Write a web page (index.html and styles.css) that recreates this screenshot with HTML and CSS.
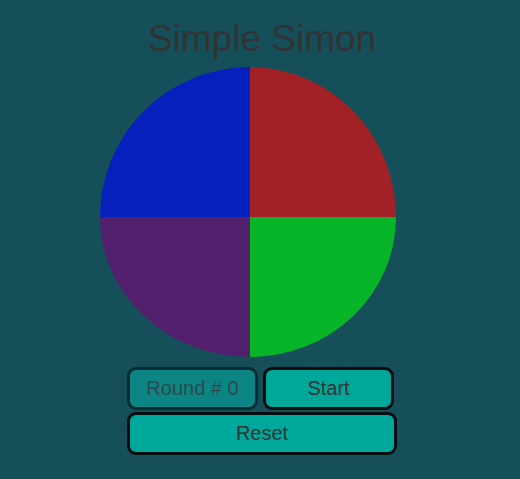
FILE: index.html
```html
<!DOCTYPE html>
<html>
<head>
<meta charset="utf-8">
<title>Simple Simon</title>
<link rel="stylesheet" href="styles.css">
</head>
<body>
<main class="app">
  <h1 class="title">Simple Simon</h1>
  <div class="board">
    <div class="row">
      <div class="pad pad-blue"></div>
      <div class="pad pad-red"></div>
    </div>
    <div class="row">
      <div class="pad pad-purple"></div>
      <div class="pad pad-green"></div>
    </div>
  </div>
  <div class="controls">
    <div class="controls-row">
      <div class="btn btn-round">Round # 0</div>
      <button class="btn btn-start">Start</button>
    </div>
    <button class="btn btn-reset">Reset</button>
  </div>
</main>
</body>
</html>
```

FILE: styles.css
```css
html, body {
  margin: 0;
  padding: 0;
  background: #154f5a;
}
body {
  font-family: "Liberation Sans", Arial, Helvetica, sans-serif;
  color: #333333;
}
.app {
  display: flex;
  flex-direction: column;
  align-items: center;
  padding-top: 17px;
}
.title {
  margin: 0 0 6px 4px;
  font-size: 37px;
  line-height: 44px;
  font-weight: normal;
  color: #333333;
}
.board {
  display: flex;
  flex-direction: column;
  width: 296px;
  margin-right: 24px;
}
.row {
  display: flex;
}
.pad-blue {
  width: 150px;
  height: 150px;
  background: #0520bd;
  border-top-left-radius: 150px 150px;
}
.pad-red {
  width: 146px;
  height: 150px;
  background: #a12126;
  border-top-right-radius: 146px 150px;
}
.pad-purple {
  width: 150px;
  height: 140px;
  background: #53206e;
  border-bottom-left-radius: 150px 140px;
}
.pad-green {
  width: 146px;
  height: 140px;
  background: #09b528;
  border-bottom-right-radius: 146px 140px;
}
.controls {
  display: flex;
  flex-direction: column;
  gap: 2px;
  width: 270px;
  margin-top: 10px;
  margin-left: 4px;
}
.controls-row {
  display: flex;
  gap: 5px;
}
.btn {
  box-sizing: border-box;
  height: 43px;
  border: 3px solid #050d0e;
  border-radius: 9px;
  background: #00a89b;
  font-family: "Liberation Sans", Arial, Helvetica, sans-serif;
  font-size: 20px;
  color: #333333;
  display: flex;
  align-items: center;
  justify-content: center;
  padding: 0;
}
.btn-round {
  width: 131px;
  background: #0b8684;
  border-color: #0c2b30;
  color: #2e4a4c;
}
.btn-start {
  width: 131px;
}
.btn-reset {
  width: 270px;
}
```
